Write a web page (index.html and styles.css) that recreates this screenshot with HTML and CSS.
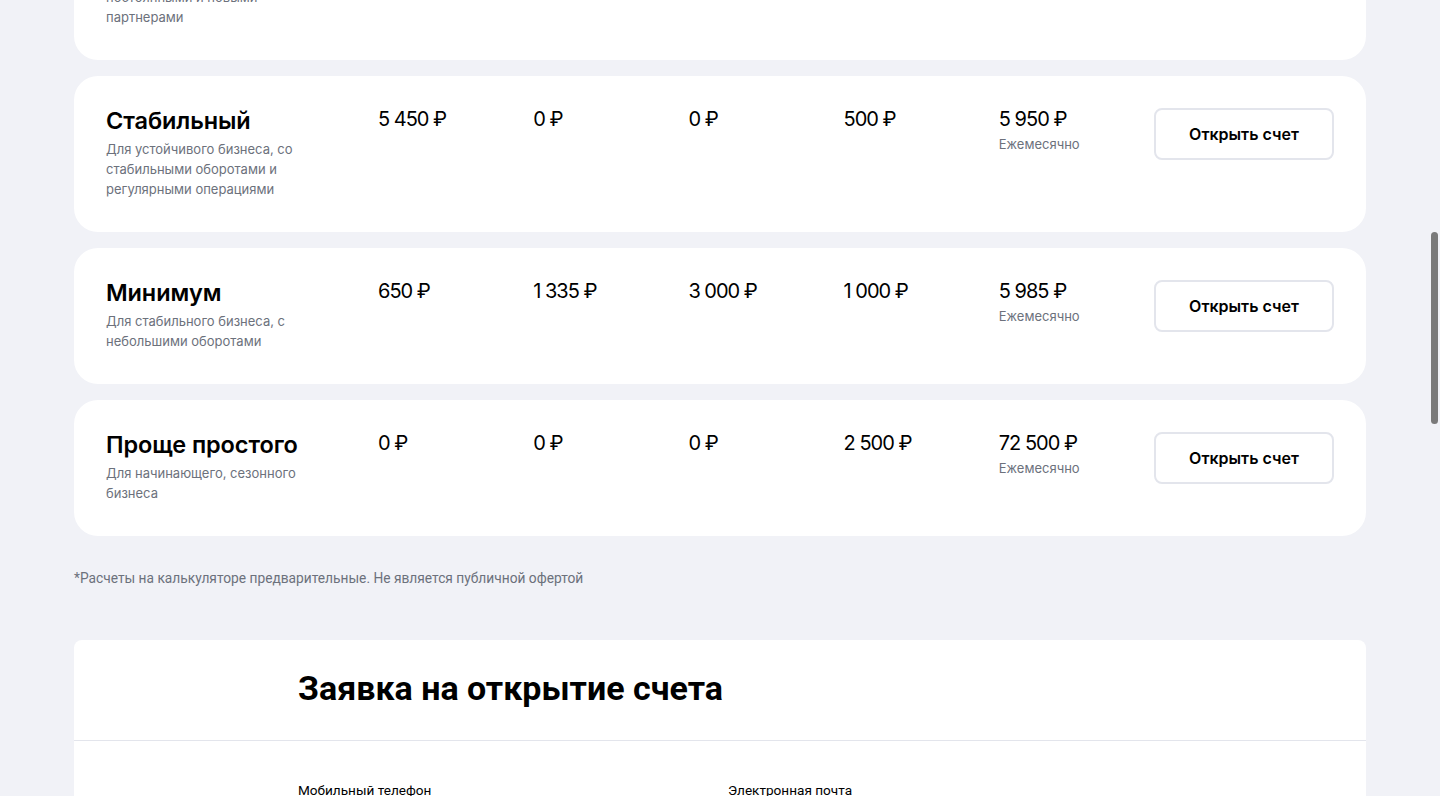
FILE: index.html
```html
<!DOCTYPE html>
<html lang="ru">
<head>
<meta charset="utf-8">
<title>Тарифы</title>
<link rel="stylesheet" href="styles.css">
</head>
<body>
<div class="page">
  <div class="tariffs">
    <div class="card card-first">
      <div class="info">
        <div class="title">Активный</div>
        <div class="sub">Для активного бизнеса, работающего с<br>постоянными и новыми<br>партнерами</div>
      </div>
      <div class="price">9 900 ₽</div>
      <div class="price">0 ₽</div>
      <div class="price">0 ₽</div>
      <div class="price">0 ₽</div>
      <div class="total"><div class="price">9 900 ₽</div><div class="period">Ежемесячно</div></div>
      <div class="btn-cell"><button class="btn">Открыть счет</button></div>
    </div>

    <div class="card">
      <div class="info">
        <div class="title">Стабильный</div>
        <div class="sub">Для устойчивого бизнеса, со стабильными оборотами и регулярными операциями</div>
      </div>
      <div class="price">5 450 ₽</div>
      <div class="price">0 ₽</div>
      <div class="price">0 ₽</div>
      <div class="price">500 ₽</div>
      <div class="total"><div class="price">5 950 ₽</div><div class="period">Ежемесячно</div></div>
      <div class="btn-cell"><button class="btn">Открыть счет</button></div>
    </div>

    <div class="card">
      <div class="info">
        <div class="title">Минимум</div>
        <div class="sub">Для стабильного бизнеса, с небольшими оборотами</div>
      </div>
      <div class="price">650 ₽</div>
      <div class="price">1 335 ₽</div>
      <div class="price">3 000 ₽</div>
      <div class="price">1 000 ₽</div>
      <div class="total"><div class="price">5 985 ₽</div><div class="period">Ежемесячно</div></div>
      <div class="btn-cell"><button class="btn">Открыть счет</button></div>
    </div>

    <div class="card">
      <div class="info">
        <div class="title">Проще простого</div>
        <div class="sub">Для начинающего, сезонного бизнеса</div>
      </div>
      <div class="price">0 ₽</div>
      <div class="price">0 ₽</div>
      <div class="price">0 ₽</div>
      <div class="price">2 500 ₽</div>
      <div class="total"><div class="price">72 500 ₽</div><div class="period">Ежемесячно</div></div>
      <div class="btn-cell"><button class="btn">Открыть счет</button></div>
    </div>
  </div>

  <p class="note">*Расчеты на калькуляторе предварительные. Не является публичной офертой</p>

  <div class="form-card">
    <div class="form-head">
      <h2 class="form-title">Заявка на открытие счета</h2>
    </div>
    <div class="form-body">
      <div class="field"><label class="label">Мобильный телефон</label></div>
      <div class="field"><label class="label">Электронная почта</label></div>
    </div>
  </div>
</div>
<div class="scrollbar"></div>
</body>
</html>
```
FILE: styles.css
```css
* { box-sizing: border-box; }
html, body { margin: 0; padding: 0; }
body {
  background: #f1f2f7;
  font-family: Inter, "Noto Sans", sans-serif;
  color: #000;
  height: 796px;
  overflow: hidden;
}
.page {
  width: 1292px;
  margin: 0 auto;
}
.tariffs {
  display: flex;
  flex-direction: column;
  gap: 16px;
  margin-top: -116px;
}
.card {
  background: #fff;
  border-radius: 24px;
  padding: 32px 32px 33px;
  display: grid;
  grid-template-columns: 272px repeat(5, 1fr) 180px;
  align-items: start;
}
.title {
  font-size: 23.5px;
  line-height: 25px;
  font-weight: 600;
  letter-spacing: -0.1px;
}
.sub {
  margin-top: 6px;
  max-width: 205px;
  font-size: 13px;
  line-height: 20px;
  color: #6c717c;
}
.price {
  font-size: 20px;
  line-height: 22px;
  font-weight: 400;
  letter-spacing: -1px;
}
.period {
  margin-top: 4px;
  font-size: 13px;
  line-height: 20px;
  color: #6c717c;
}
.btn-cell { display: flex; }
.btn {
  width: 180px;
  height: 52px;
  border: 2px solid #e3e5ec;
  border-radius: 8px;
  background: #fff;
  font-family: Inter, "Noto Sans", sans-serif;
  font-size: 16px;
  font-weight: 600;
  color: #000;
  padding: 0;
}
.note {
  margin: 33px 0 0;
  font-family: Roboto, sans-serif;
  font-size: 13.75px;
  line-height: 18px;
  color: #6c717c;
}
.form-card {
  margin-top: 53px;
  background: #fff;
  border-radius: 8px 8px 0 0;
}
.form-head {
  height: 101px;
  padding: 28px 0 0 224px;
  border-bottom: 1px solid #e3e5ec;
}
.form-title {
  margin: 0;
  font-family: Roboto, sans-serif;
  font-size: 34px;
  line-height: 40px;
  font-weight: 700;
}
.form-body {
  display: grid;
  grid-template-columns: 430px 430px;
  padding: 38px 0 0 224px;
}
.label {
  font-family: Roboto, sans-serif;
  font-size: 13.6px;
  line-height: 18px;
  color: #000;
}
.scrollbar {
  position: fixed;
  left: 1431px;
  top: 232px;
  width: 7px;
  height: 192px;
  border-radius: 4px;
  background: #7a7a7a;
}
```
